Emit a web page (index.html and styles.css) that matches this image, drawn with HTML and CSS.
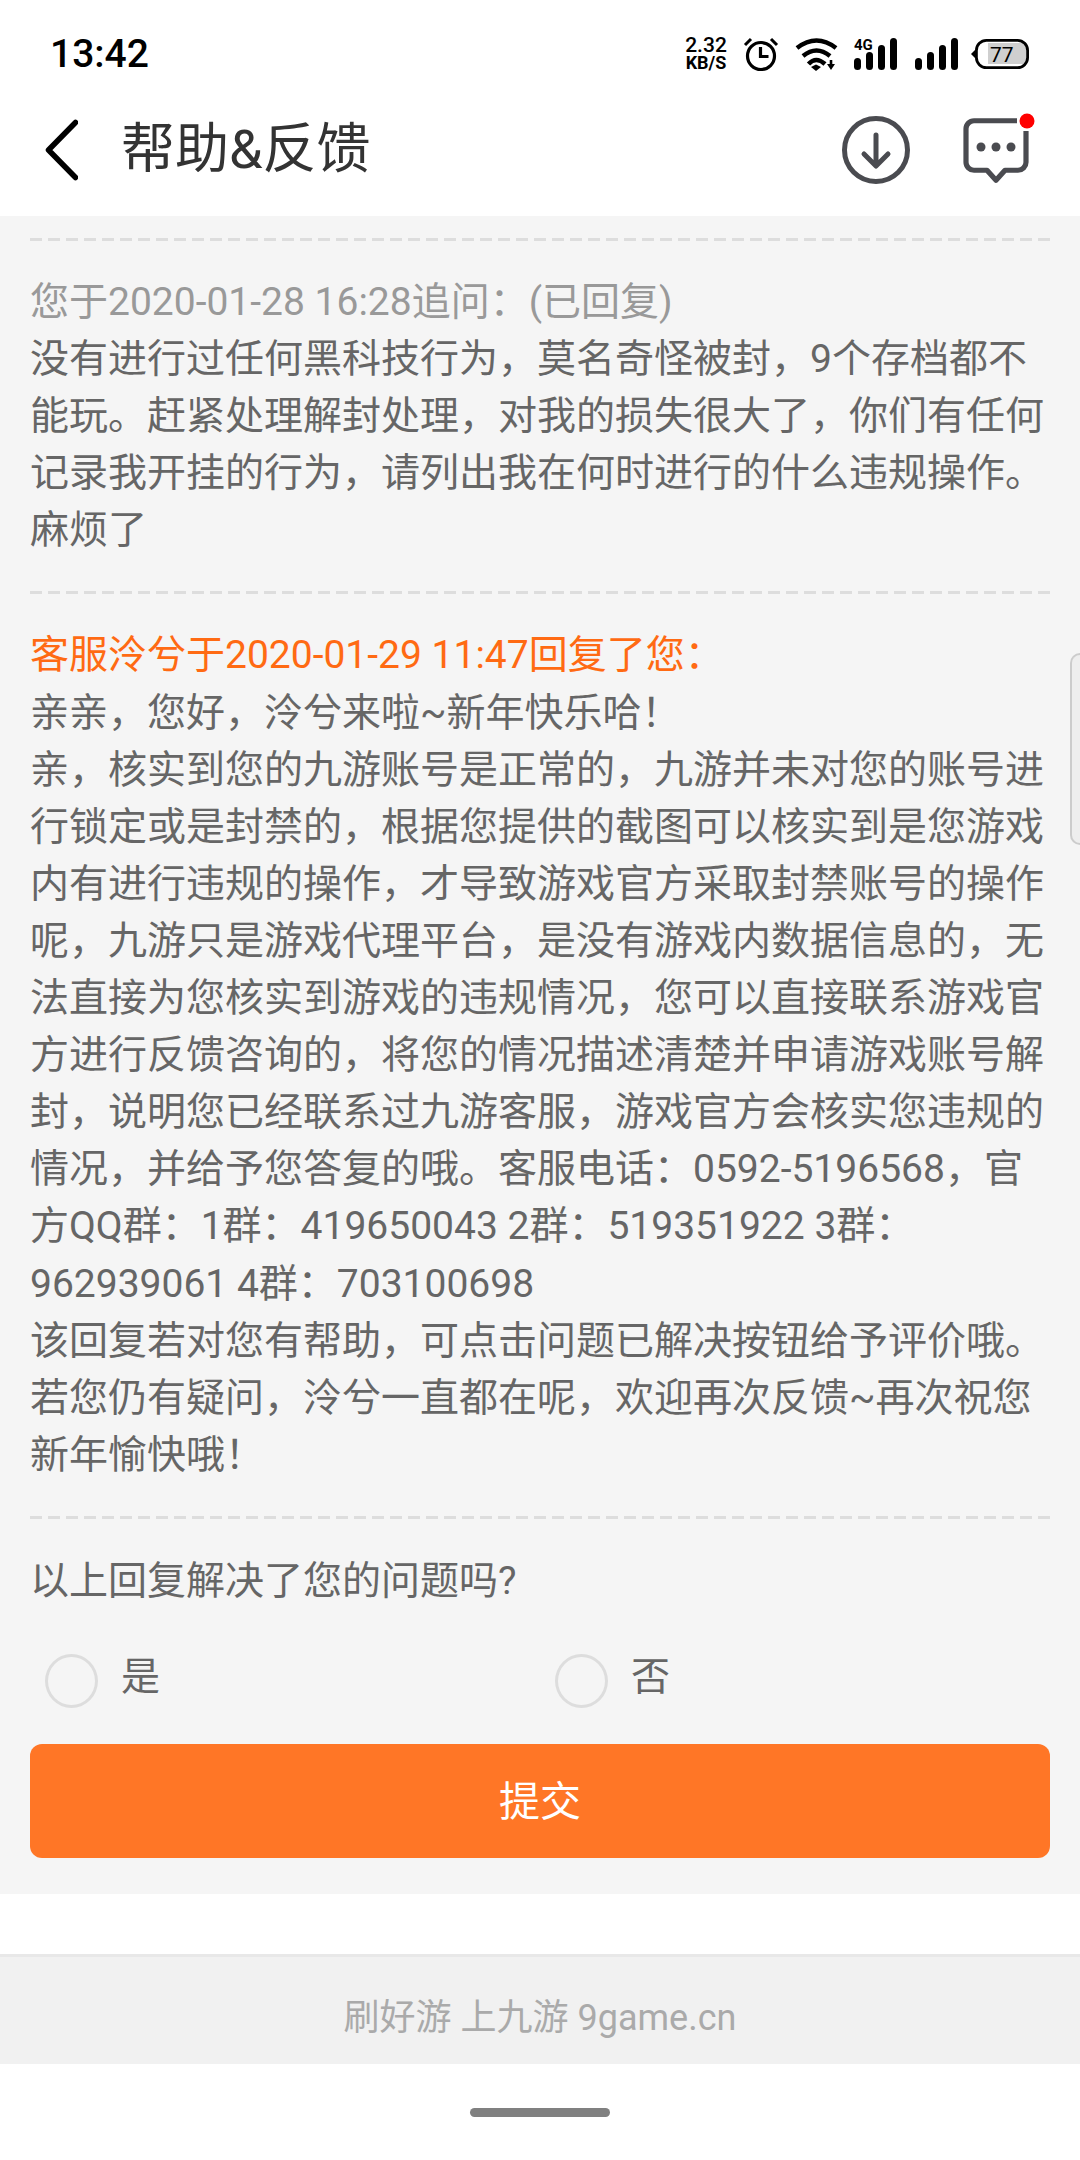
FILE: index.html
```html
<!DOCTYPE html>
<html lang="zh-CN">
<head>
<meta charset="utf-8">
<title>帮助&amp;反馈</title>
<link rel="stylesheet" href="styles.css">
</head>
<body>
<div class="page">
  <div class="status">
    <span class="time">13:42</span>
    <div class="status-icons">
      <span class="speed"><span class="speed-num">2.32</span><span class="speed-unit">KB/S</span></span>
      <svg class="ic-alarm" width="36" height="36" viewBox="0 0 36 36"><circle cx="18" cy="20" r="13.5" fill="none" stroke="#000" stroke-width="3.2"/><path d="M17.5 11v9.5h8" fill="none" stroke="#000" stroke-width="3.2"/><path d="M2 9l6-6M34 9l-6-6" fill="none" stroke="#000" stroke-width="3"/></svg>
      <svg class="ic-wifi" width="44" height="34" viewBox="0 0 44 34"><path d="M2 11Q21.500-4 41 11" fill="none" stroke="#000" stroke-width="4.500"/><path d="M8 19Q21.500 8 35 19" fill="none" stroke="#000" stroke-width="4.500"/><path d="M13.500 27Q21 19 30 27" fill="none" stroke="#000" stroke-width="4.500"/><path d="M16 30l5-2.500 5 2.500-5 4z"/><path d="M36 23v7" stroke="#000" stroke-width="2.600"/><path d="M32 27h8l-4 6z"/></svg>
      <svg class="ic-signal" width="44" height="34" viewBox="0 -1 44 34"><text x="0" y="12" class="tag-4g">4G</text><rect x="0" y="20" width="7" height="12" rx="3.500"/><rect x="12" y="14" width="7" height="18" rx="3.500"/><rect x="24" y="7" width="7" height="25" rx="3.500"/><rect x="36" y="0" width="7" height="32" rx="3.500"/></svg>
      <svg class="ic-signal" width="44" height="34" viewBox="0 -1 44 34"><rect x="0" y="20" width="7" height="12" rx="3.500"/><rect x="12" y="14" width="7" height="18" rx="3.500"/><rect x="24" y="7" width="7" height="25" rx="3.500"/><rect x="36" y="0" width="7" height="32" rx="3.500"/></svg>
      <svg class="ic-batt" width="60" height="32" viewBox="0 0 60 32"><rect x="18" y="5" width="38" height="21" fill="#cfcfcf"/><rect x="6.400" y="2.400" width="51.200" height="27.200" rx="10" fill="none" stroke="#000" stroke-width="2.800"/><path d="M5 12l-4 4 4 4z"/><text x="20" y="23.700" class="batt-num">77</text></svg>
    </div>
  </div>

  <header class="nav">
    <svg class="back" width="34" height="62" viewBox="0 0 34 62"><path d="M31.500 3.500L4.500 31l27 27.500" fill="none" stroke="#000" stroke-width="5.500" stroke-linecap="round" stroke-linejoin="round"/></svg>
    <h1 class="title">帮助&amp;反馈</h1>
    <div class="nav-actions">
      <svg width="70" height="70" viewBox="0 0 70 70"><circle cx="35" cy="35" r="31.500" fill="none" stroke="#4a4b50" stroke-width="5"/><path d="M35 20v30M23 39l12 12 12-12" fill="none" stroke="#4a4b50" stroke-width="5" stroke-linecap="round" stroke-linejoin="round"/></svg>
      <svg width="76" height="74" viewBox="0 0 76 74"><path d="M57 7.750H14a8 8 0 0 0-8 8V49.250a8 8 0 0 0 8 8h13l9 10 9-10h13a8 8 0 0 0 8-8V18" fill="none" stroke="#4a4b50" stroke-width="5.200" stroke-linejoin="round"/><circle cx="21" cy="34" r="4.500" fill="#4a4b50"/><circle cx="36" cy="34" r="4.500" fill="#4a4b50"/><circle cx="51" cy="34" r="4.500" fill="#4a4b50"/><circle cx="67" cy="8" r="7.500" fill="#f00"/></svg>
    </div>
  </header>

  <main class="content">
    <div class="dash"></div>
    <section class="msg">
      <div class="meta">您于2020-01-28 16:28追问：(已回复)</div>
      <div>没有进行过任何黑科技行为，莫名奇怪被封，9个存档都不<br>能玩。赶紧处理解封处理，对我的损失很大了，你们有任何<br>记录我开挂的行为，请列出我在何时进行的什么违规操作。<br>麻烦了</div>
    </section>
    <div class="dash"></div>
    <section class="msg">
      <div class="reply-head">客服泠兮于2020-01-29 11:47回复了您：</div>
      <div>亲亲，您好，泠兮来啦~新年快乐哈！<br>亲，核实到您的九游账号是正常的，九游并未对您的账号进<br>行锁定或是封禁的，根据您提供的截图可以核实到是您游戏<br>内有进行违规的操作，才导致游戏官方采取封禁账号的操作<br>呢，九游只是游戏代理平台，是没有游戏内数据信息的，无<br>法直接为您核实到游戏的违规情况，您可以直接联系游戏官<br>方进行反馈咨询的，将您的情况描述清楚并申请游戏账号解<br>封，说明您已经联系过九游客服，游戏官方会核实您违规的<br>情况，并给予您答复的哦。客服电话：0592-5196568，官<br>方QQ群：1群：419650043 2群：519351922 3群：<br>962939061 4群：703100698<br>该回复若对您有帮助，可点击问题已解决按钮给予评价哦。<br>若您仍有疑问，泠兮一直都在呢，欢迎再次反馈~再次祝您<br>新年愉快哦！</div>
    </section>
    <div class="dash"></div>
    <div class="question">以上回复解决了您的问题吗?</div>
    <div class="options">
      <label class="option"><span class="radio"></span><span class="opt-text">是</span></label>
      <label class="option"><span class="radio"></span><span class="opt-text">否</span></label>
    </div>
    <button class="submit">提交</button>
  </main>

  <div class="spacer"></div>
  <footer class="foot">刷好游 上九游 9game.cn</footer>
  <div class="gesture"><span class="pill"></span></div>
  <div class="edge-handle"></div>
</div>
</body>
</html>
```
FILE: styles.css
```css
* { box-sizing: border-box; }
html, body { margin: 0; padding: 0; background: #fff; }
body { font-family: Roboto, "Noto Sans CJK SC", sans-serif; }
.page { position: relative; width: 1080px; height: 2160px; overflow: hidden; display: flex; flex-direction: column; }

.status { height: 76px; padding: 32px 50px 0 50px; display: flex; align-items: center; justify-content: space-between; flex: none; }
.time { font-size: 39px; font-weight: 500; color: #000; }
.status-icons { display: flex; align-items: center; }
.speed { display: flex; flex-direction: column; align-items: center; width: 44px; margin-right: 15px; color: #000; font-weight: 500; }
.speed-num { font-size: 21px; line-height: 18px; }
.speed-unit { font-size: 18px; line-height: 18px; font-weight: 700; }
.ic-alarm { margin-right: 16px; }
.ic-wifi { margin-right: 15px; }
.ic-signal { margin-right: 17px; overflow: visible; }
.ic-signal + .ic-batt { margin-left: -6px; }
.tag-4g { font-size: 15px; font-weight: 700; font-family: Roboto, sans-serif; }
.batt-num { font-size: 21px; font-family: Roboto, sans-serif; }

.nav { height: 140px; padding: 8px 0 0 44px; display: flex; align-items: center; flex: none; }
.back { flex: none; margin-right: 43px; }
.title { margin: 0; font-size: 54px; font-weight: 400; color: #333; line-height: 1; }
.nav-actions { margin-left: auto; display: flex; align-items: center; gap: 49px; padding-right: 44px; }

.content { background: #f5f5f5; padding: 22px 30px 36px; font-size: 39px; line-height: 57.1px; color: #666; flex: none; }
.dash { height: 3px; background: repeating-linear-gradient(90deg, #ddd 0 12px, transparent 12px 18px); }
.msg { padding: 33px 0 32px; }
.meta { color: #999; }
.reply-head { color: #ff6a13; }
.question { margin-top: 33px; line-height: 58px; }
.options { display: flex; margin-top: 41px; height: 60px; align-items: center; padding-left: 15px; }
.option { display: flex; align-items: center; gap: 23px; width: 510px; }
.option:first-child { width: 510px; flex: 0 0 510px; }
.opt-text { position: relative; top: -3px; }
.radio { width: 53px; height: 54px; border-radius: 50%; border: 3px solid #ddd; flex: none; }
.submit { display: block; width: 100%; height: 114px; margin-top: 33px; padding: 3px 0 0; border: 0; border-radius: 12px; background: #ff7626; color: #fff; font: inherit; font-size: 41px; }

.spacer { height: 60px; flex: none; }
.foot { height: 110px; flex: none; padding-top: 8px; background: #f1f1f1; border-top: 3px solid #e8e8e8; color: #aaa; font-size: 36px; display: flex; align-items: center; justify-content: center; }
.gesture { flex: 1; display: flex; justify-content: center; padding-top: 44px; }
.pill { width: 140px; height: 9px; border-radius: 5px; background: #808080; }
.edge-handle { position: absolute; right: 0; top: 653px; width: 10px; height: 192px; background: #eee; border: 2px solid #ccc; border-right: 0; border-radius: 10px 0 0 10px; }
```
